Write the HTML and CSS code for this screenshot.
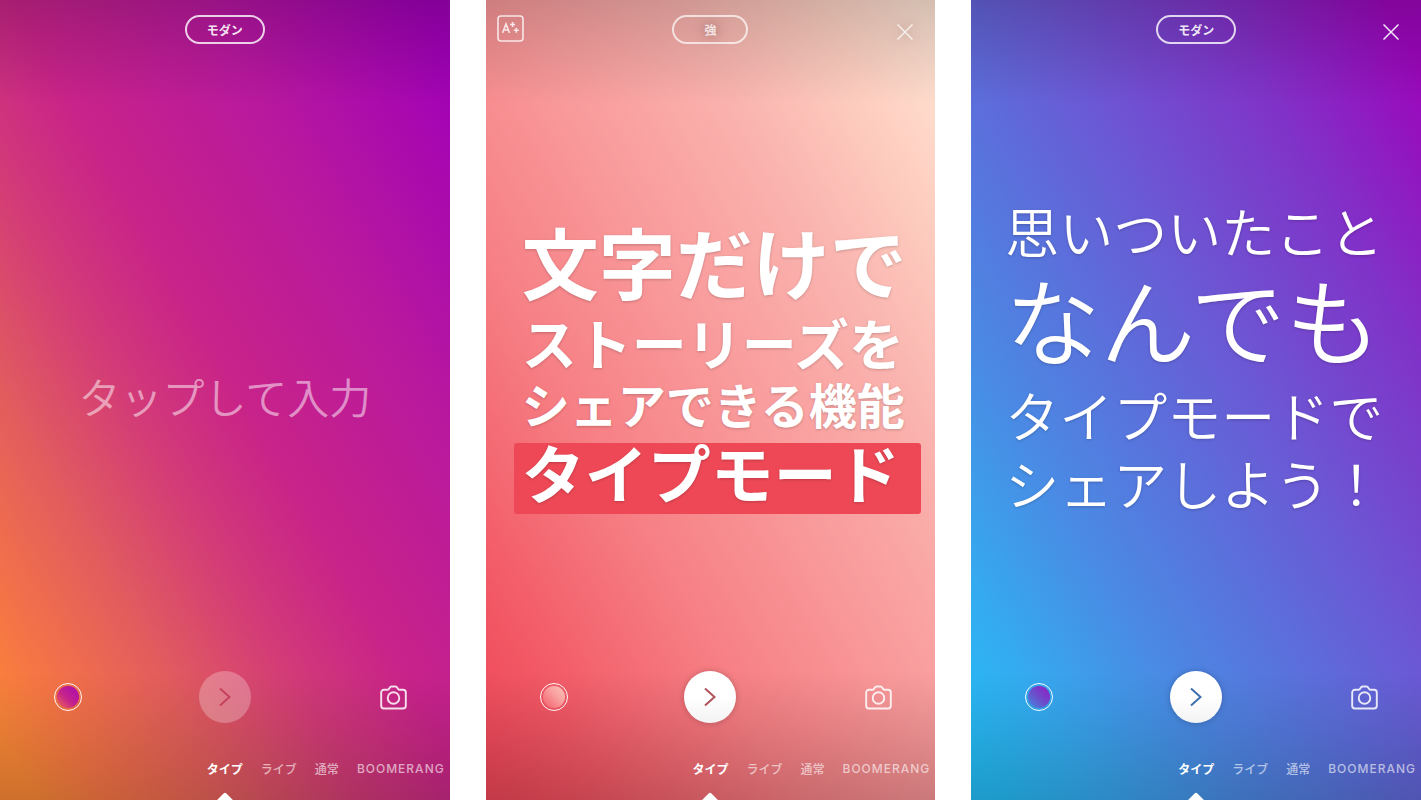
FILE: index.html
```
<!DOCTYPE html>
<html lang="ja">
    <head>
        <meta charset="UTF-8"/>
        <meta name="viewport" content="width=device-width, initial-scale=1.0"/>
        <title>タイプモード</title>
        <link rel="stylesheet" href="styles.css">
    </head>
    <body>
        <!-- 共通アイコン -->
        <svg class="icons" width="0" height="0" aria-hidden="true">
            <symbol id="camera" viewBox="0 0 28 26">
                <path d="M4 5h3.500c1 0 1.400-.4 1.900-1.200l.6-1C10.500 1.900 11 1.500 12 1.500h4c1 0 1.500.4 2 1.300l.6 1c.5.800.9 1.200 1.900 1.200H24a2.800 2.800 0 0 1 2.800 2.800v13.900A2.800 2.800 0 0 1 24 24.500H4a2.800 2.800 0 0 1-2.800-2.800V7.800A2.800 2.800 0 0 1 4 5z"/>
                <circle cx="14" cy="13.500" r="6"/>
            </symbol>
            <symbol id="next" viewBox="0 0 52 52">
                <path d="M21 17.500l9.500 8.500-9.500 8.500"/>
            </symbol>
            <symbol id="cross" viewBox="0 0 16 16">
                <path d="M.5.5l15 15M15.500.5l-15 15"/>
            </symbol>
        </svg>

        <div class="screens">
            <section class="screen sunset">
                <header class="top">
                    <button class="style-btn">モダン</button>
                </header>
                <main class="canvas">
                    <input class="entry" type="text" placeholder="タップして入力" aria-label="タップして入力">
                </main>
                <footer class="bottom">
                    <div class="tools">
                        <button class="swatch" aria-label="背景色"><span></span></button>
                        <button class="next off" aria-label="次へ"><svg><use href="#next"/></svg></button>
                        <button class="camera" aria-label="カメラ"><svg><use href="#camera"/></svg></button>
                    </div>
                    <nav class="modes">
                        <button class="on">タイプ</button>
                        <button>ライブ</button>
                        <button>通常</button>
                        <button>BOOMERANG</button>
                    </nav>
                </footer>
            </section>

            <section class="screen coral">
                <header class="top">
                    <button class="effect" aria-label="文字の背景">
                        <svg viewBox="0 0 27 27">
                            <rect x="1" y="1" width="25" height="25" rx="3"/>
                            <path d="M5.500 18L9 9l3.500 9M6.700 15h4.600M15.600 7v5M13.100 9.500h5M19.300 12.700v5M16.800 15.200h5"/>
                        </svg>
                    </button>
                    <button class="style-btn">強</button>
                    <button class="close" aria-label="閉じる"><svg><use href="#cross"/></svg></button>
                </header>
                <main class="canvas strong">
                    <p class="l1">文字だけで</p>
                    <p class="l2">ストーリーズを</p>
                    <p class="l3">シェアできる機能</p>
                    <p class="l4">タイプモード</p>
                </main>
                <footer class="bottom">
                    <div class="tools">
                        <button class="swatch" aria-label="背景色"><span></span></button>
                        <button class="next" aria-label="次へ"><svg><use href="#next"/></svg></button>
                        <button class="camera" aria-label="カメラ"><svg><use href="#camera"/></svg></button>
                    </div>
                    <nav class="modes">
                        <button class="on">タイプ</button>
                        <button>ライブ</button>
                        <button>通常</button>
                        <button>BOOMERANG</button>
                    </nav>
                </footer>
            </section>

            <section class="screen ocean">
                <header class="top">
                    <button class="style-btn">モダン</button>
                    <button class="close" aria-label="閉じる"><svg><use href="#cross"/></svg></button>
                </header>
                <main class="canvas modern">
                    <p class="m1">思いついたこと</p>
                    <p class="m2">なんでも</p>
                    <p class="m3">タイプモードで</p>
                    <p class="m3">シェアしよう！</p>
                </main>
                <footer class="bottom">
                    <div class="tools">
                        <button class="swatch" aria-label="背景色"><span></span></button>
                        <button class="next" aria-label="次へ"><svg><use href="#next"/></svg></button>
                        <button class="camera" aria-label="カメラ"><svg><use href="#camera"/></svg></button>
                    </div>
                    <nav class="modes">
                        <button class="on">タイプ</button>
                        <button>ライブ</button>
                        <button>通常</button>
                        <button>BOOMERANG</button>
                    </nav>
                </footer>
            </section>
        </div>
    </body>
</html>
```
FILE: styles.css
```
*{margin: 0; padding: 0; box-sizing: border-box}
body{background: #fff; color: #fff; font-family: "Noto Sans CJK JP", sans-serif;}
button, input{border: 0; background: none; color: inherit; font: inherit;}
button{cursor: pointer;}
svg{display: block; fill: none; stroke: currentColor;}
.icons{position: absolute;}

.screens{display: grid; grid-template-columns: repeat(3, minmax(0, 1fr)); gap: 36px; min-height: 100vh;}
.screen{
    --shade: linear-gradient(rgba(0,0,0,.17), rgba(0,0,0,0) 13%, rgba(0,0,0,0) 84%, rgba(0,0,0,.18));
    position: relative; overflow: hidden;
    display: flex; flex-direction: column;
    background: var(--shade), var(--fill);
}
.sunset{--fill: linear-gradient(60deg, #fb8836 4%, #f67545 12%, #e25c5e 26%, #d23a78 40%, #c82389 52%, #b8189e 73%, #9f00b7 97%); --arrow: #c5425f;}
.coral{--fill: linear-gradient(60deg, #ee4758 2%, #f25764 13%, #f67f84 34%, #f99b9c 54%, #fab4af 72%, #fed0c2 87%, #ffe3d3 98%); --arrow: #b0525a;}
.ocean{--fill: linear-gradient(60deg, #24bcf5 3%, #35aaf0 14%, #4a8ae4 29%, #5c6edb 45%, #6d55d3 59%, #8033c8 77%, #9c06bb 96%); --arrow: #3f70ae;}

/* 上部バー */
.top{display: grid; grid-template-columns: 1fr auto 1fr; align-items: start; height: 60px; padding: 15px 22px 0 11px;}
.style-btn{
    grid-column: 2; min-width: 76px; height: 29px; padding: 0 20px; margin-left: 11px;
    border: 2px solid rgba(255,255,255,.8); border-radius: 15px;
    font-size: 12px; line-height: 24px; font-weight: 700; color: rgba(255,255,255,.9);
}
.effect{grid-column: 1; width: 27px; height: 27px; color: rgba(255,255,255,.8);}
.effect svg{width: 27px; height: 27px; stroke-width: 1.600;}
.close{grid-column: 3; justify-self: end; margin-top: 9px; color: rgba(255,255,255,.9);}
.close svg{width: 16px; height: 16px; stroke-width: 1.500;}
.coral .style-btn, .coral .close{color: rgba(255,255,255,.75);}
.coral .style-btn{border-color: rgba(255,255,255,.7); text-shadow: 0 0 12px rgba(80,40,40,.5);}
.coral .close svg{filter: drop-shadow(0 0 5px rgba(80,40,40,.3));}

/* 文字入力 */
.canvas{flex: 1; display: flex; flex-direction: column; justify-content: center; padding: 0 36px;}
.canvas p{white-space: nowrap; text-shadow: 0 1px 3px rgba(0,0,0,.2);}
.entry{width: 100%; margin-top: 60px; text-align: center; font-size: 42px; line-height: 60px; font-weight: 350;}
.entry::placeholder{color: rgba(255,255,255,.5); opacity: 1;}

.strong{font-weight: 700; padding-bottom: 3px;}
.l1{font-size: 77px; line-height: 92px;}
.l2{font-size: 55px; line-height: 68px;}
.l3{font-size: 48px; line-height: 56px;}
.l4{font-size: 63px; line-height: 56px; margin: 12px -22px 0 -8px; padding: 0 8px 15px; background: #ee4856; border-radius: 3px;}

.modern{font-weight: 350; padding: 0 30px 14px 34px;}
.m1{font-size: 54px; line-height: 62px;}
.m2{font-size: 95px; line-height: 112px; margin-bottom: 7px;}
.m3{font-size: 54px; line-height: 68px;}

/* 下部ツール */
.bottom{height: 129px;}
.tools{display: grid; grid-template-columns: 1fr auto 1fr; align-items: center; padding: 0 43px 0 54px;}
.swatch{width: 28px; height: 28px; border: 1px solid rgba(255,255,255,.95); border-radius: 50%; padding: 2px;}
.swatch span{display: block; width: 22px; height: 22px; border-radius: 50%; background: linear-gradient(45deg, #f06a50, #c4228c 45%, #a80bb0);}
.coral .swatch span{background: linear-gradient(45deg, #f25f6a, #f9a3a2 60%, #fdc6bb);}
.ocean .swatch span{background: linear-gradient(45deg, #3f8ee0, #6a50cc 45%, #9418c0);}
.next{width: 52px; height: 52px; border-radius: 50%; margin-right: 11px; background: linear-gradient(#fff 50%, #f3f3f3); color: var(--arrow); box-shadow: 0 0 6px rgba(0,0,0,.22);}
.next svg{width: 52px; height: 52px; stroke-width: 2;}
.next.off{background: rgba(255,255,255,.26); box-shadow: none;}
.camera{justify-self: end; color: rgba(255,255,255,.85);}
.camera svg{width: 27px; height: 25px; stroke-width: 2;}
.modes{display: flex; gap: 18px; padding: 36px 0 0 calc(50% - 18px); font-size: 12px; line-height: 20px; white-space: nowrap;}
.modes button{flex: none; color: rgba(255,255,255,.6); font-weight: 500;}
.modes button:last-child{font-family: Inter, sans-serif; letter-spacing: 1px;}
.modes .on{color: #fff; font-weight: 700;}
.screen::after{
    content: ""; position: absolute; left: 50%; bottom: -9px; width: 14px; height: 14px; margin-left: -7px;
    background: #fff; border-radius: 2px; transform: rotate(45deg);
}
```
